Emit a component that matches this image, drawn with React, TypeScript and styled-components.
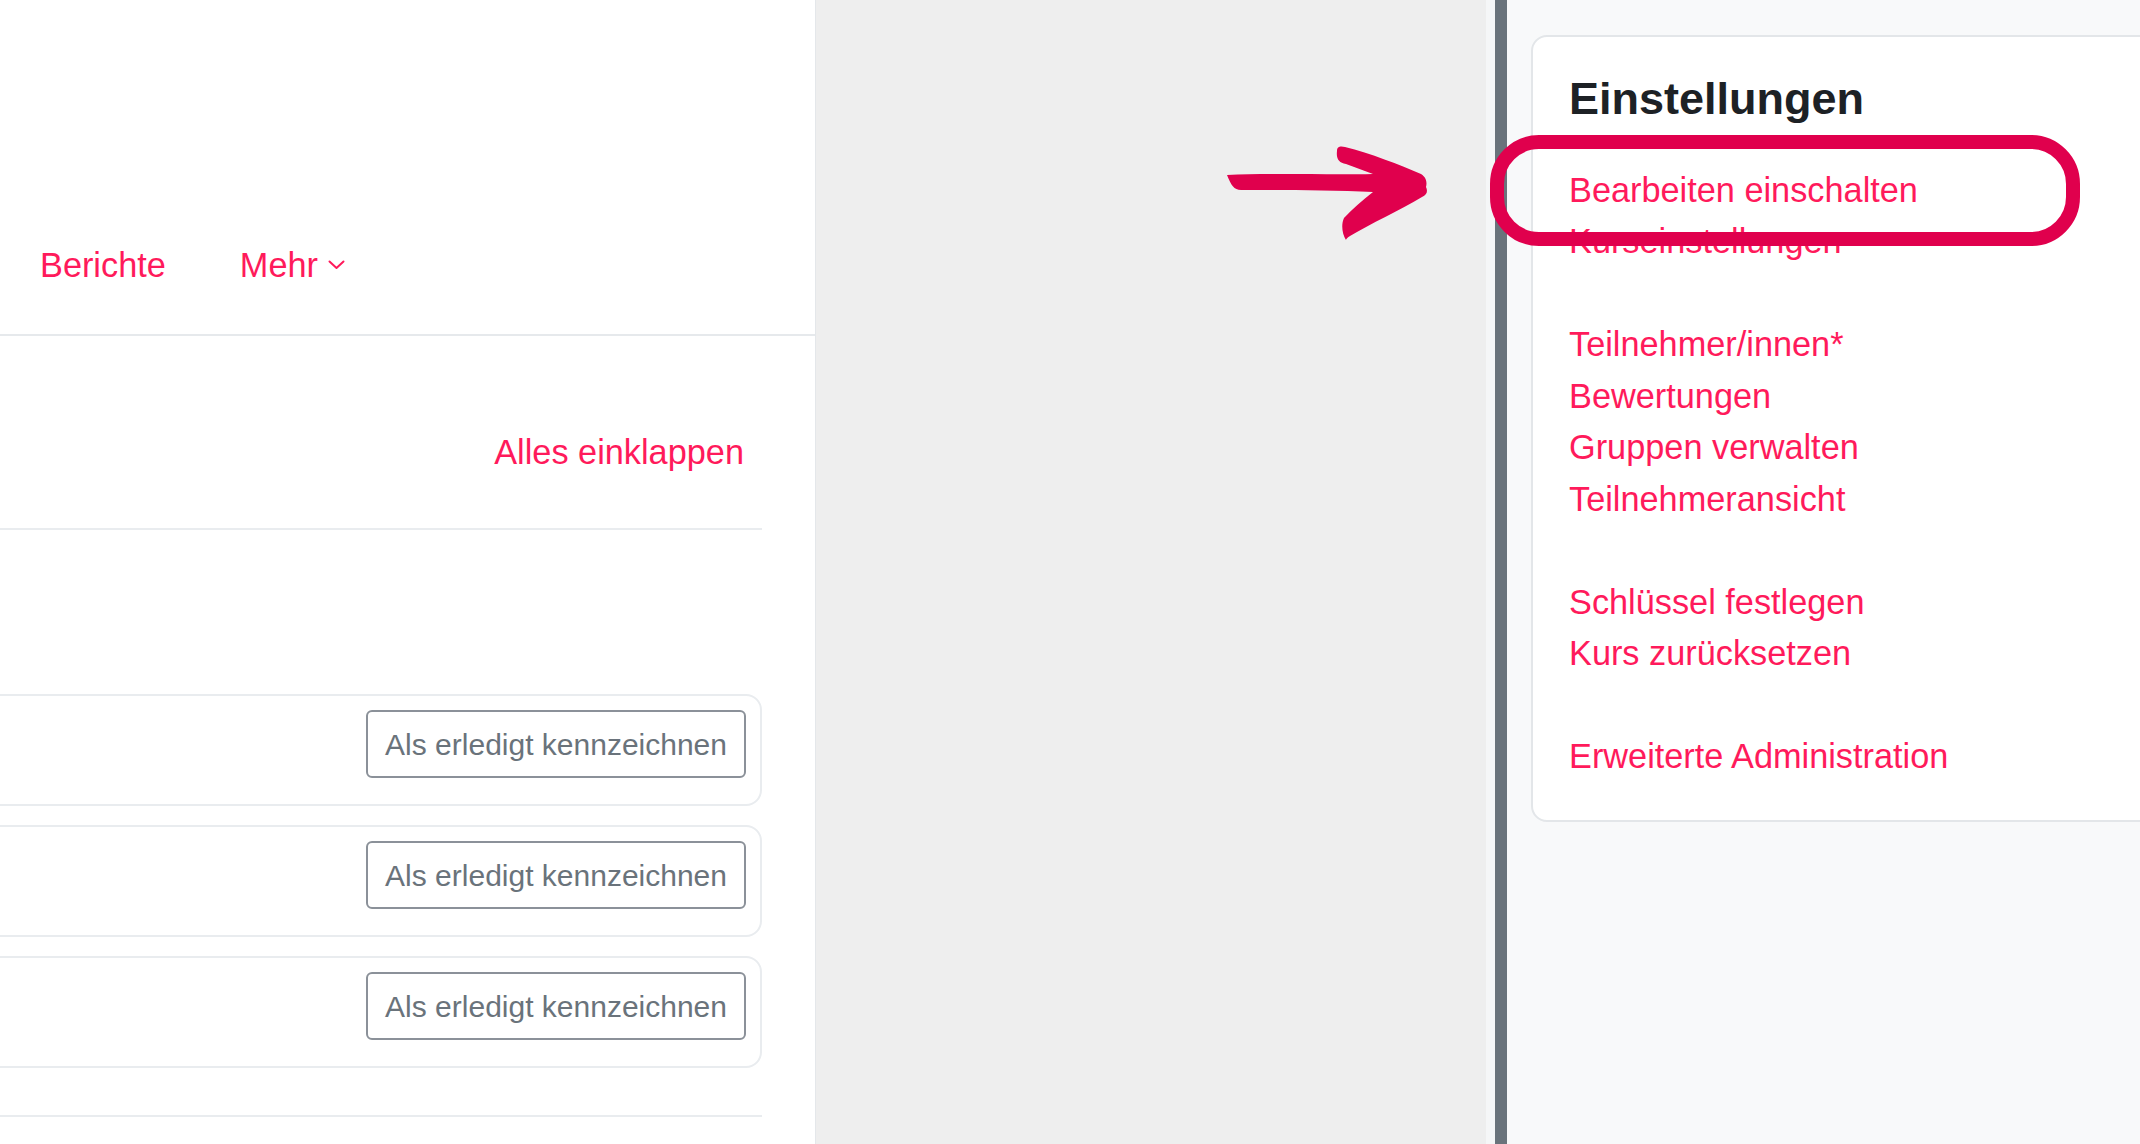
import React from "react";
import styled, { createGlobalStyle } from "styled-components";

const LINK = "#ff1a5b";
const MARKER = "#e0004d";

const GlobalStyle = createGlobalStyle`
  html, body {
    margin: 0;
    padding: 0;
  }
  body {
    font-family: "Liberation Sans", Arial, Helvetica, sans-serif;
    background: #eeeeee;
    overflow: hidden;
  }
`;

const Page = styled.div`
  position: relative;
  display: flex;
  width: 2140px;
  height: 1144px;
  overflow: hidden;
`;

/* ---------- course page (left) ---------- */

const CoursePanel = styled.main`
  flex: 0 0 816px;
  box-sizing: border-box;
  display: flex;
  flex-direction: column;
  background: #fff;
  border-right: 1px solid #e4e7ea;
  overflow: hidden;
`;

const Header = styled.header`
  height: 336px;
  box-sizing: border-box;
  display: flex;
  align-items: flex-end;
  border-bottom: 2px solid #e6e9ec;
`;

const Nav = styled.nav`
  display: flex;
  padding: 0 0 43px 3px;
`;

const NavItem = styled.a`
  display: flex;
  align-items: center;
  gap: 10px;
  padding: 0 37px;
  font-size: 34.3px;
  line-height: 1.5;
  color: ${LINK};
  text-decoration: none;
`;

const Content = styled.section`
  width: 792px;
  margin-left: -30px;
  padding-top: 91px;
`;

const CollapseRow = styled.div`
  display: flex;
  justify-content: flex-end;
  padding: 0 18px 50px 0;
  border-bottom: 2px solid #e9ecef;
`;

const TextLink = styled.a`
  font-size: 34.3px;
  line-height: 1.5;
  color: ${LINK};
  text-decoration: none;
`;

const ActivityList = styled.div`
  display: flex;
  flex-direction: column;
  gap: 19px;
  margin-top: 164px;
  padding-bottom: 47px;
  border-bottom: 2px solid #e9ecef;
`;

const ActivityCard = styled.div`
  display: flex;
  justify-content: flex-end;
  padding: 14px 14px 26px;
  border: 2px solid #e9ecef;
  border-radius: 16px;
`;

const CompletionButton = styled.button`
  font-family: inherit;
  font-size: 30px;
  line-height: 45px;
  padding: 9.5px 17px;
  color: #6a737b;
  background: #fff;
  border: 2px solid #8b9199;
  border-radius: 6px;
`;

/* ---------- gutter + drawer (right) ---------- */

const Gutter = styled.div`
  flex: 0 0 679px;
  box-sizing: border-box;
  background: #eeeeee;
  border-right: 9px solid #f5f6f7;
`;

const Drawer = styled.aside`
  flex: 1;
  background: #f8f9fa;
  border-left: 12px solid #6a737b;
  padding: 35px 0 0 24px;
  overflow: hidden;
`;

const SettingsCard = styled.div`
  width: 700px;
  background: #fff;
  border: 2px solid #e3e6e9;
  border-radius: 16px;
  padding: 35px 36px 38px;
`;

const Heading = styled.h2`
  margin: 0 0 39px;
  font-size: 45px;
  line-height: 54px;
  font-weight: 700;
  color: #1d2125;
`;

const LinkGroup = styled.div`
  display: flex;
  flex-direction: column;
  margin-bottom: 51.45px;

  &:last-child {
    margin-bottom: 0;
  }
`;

/* ---------- hand-drawn markers ---------- */

const Markers = styled.svg`
  position: absolute;
  top: 0;
  left: 0;
  pointer-events: none;
`;

const groups: string[][] = [
  ["Bearbeiten einschalten", "Kurseinstellungen"],
  ["Teilnehmer/innen*", "Bewertungen", "Gruppen verwalten", "Teilnehmeransicht"],
  ["Schlüssel festlegen", "Kurs zurücksetzen"],
  ["Erweiterte Administration"],
];

const Chevron = () => (
  <svg width="17" height="10" viewBox="0 0 17 10">
    <polyline
      points="1.5,1.5 8.5,8 15.5,1.5"
      fill="none"
      stroke={LINK}
      strokeWidth="2"
      strokeLinecap="round"
      strokeLinejoin="round"
    />
  </svg>
);

export default function App() {
  return (
    <>
      <GlobalStyle />
      <Page>
        <CoursePanel>
          <Header>
            <Nav>
              <NavItem href="#">Berichte</NavItem>
              <NavItem href="#">
                Mehr <Chevron />
              </NavItem>
            </Nav>
          </Header>
          <Content>
            <CollapseRow>
              <TextLink href="#">Alles einklappen</TextLink>
            </CollapseRow>
            <ActivityList>
              {[0, 1, 2].map((i) => (
                <ActivityCard key={i}>
                  <CompletionButton>Als erledigt kennzeichnen</CompletionButton>
                </ActivityCard>
              ))}
            </ActivityList>
          </Content>
        </CoursePanel>

        <Gutter />

        <Drawer>
          <SettingsCard>
            <Heading>Einstellungen</Heading>
            {groups.map((g, i) => (
              <LinkGroup key={i}>
                {g.map((label) => (
                  <TextLink key={label} href="#">
                    {label}
                  </TextLink>
                ))}
              </LinkGroup>
            ))}
          </SettingsCard>
        </Drawer>

        <Markers width="2140" height="1144" viewBox="0 0 2140 1144">
          <g transform="translate(1220 140)" fill={MARKER}>
            <path
              d="M 7 35
                 C 50 33, 110 35, 153 34
                 L 126 24
                 C 119 23, 116 19, 117 11
                 C 117 6, 121 6, 125 7
                 C 150 13, 180 25, 201 34
                 C 207 38, 207 43, 206 47
                 C 208 51, 207 55, 202 57
                 C 180 70, 150 84, 130 96
                 C 127 98, 126 99, 126 100
                 C 122 94, 121 84, 124 78
                 C 132 69, 142 61, 153 52
                 C 110 50, 55 50, 21 50
                 C 14 50, 11 45, 7 35 Z"
            />
          </g>
          <rect
            x="1497"
            y="142"
            width="576"
            height="97"
            rx="42"
            fill="none"
            stroke={MARKER}
            strokeWidth="14"
          />
        </Markers>
      </Page>
    </>
  );
}
